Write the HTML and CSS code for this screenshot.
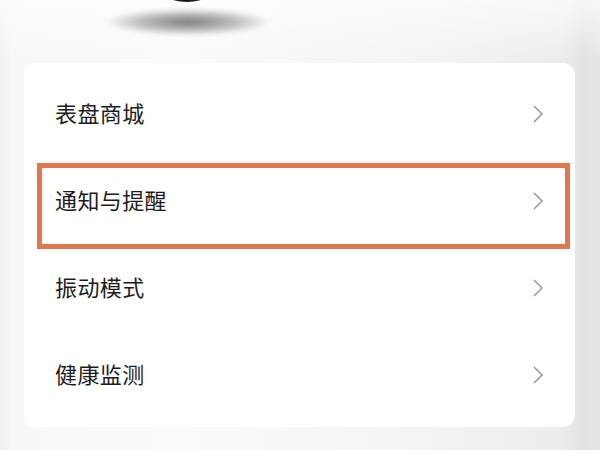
FILE: index.html
```html
<!DOCTYPE html>
<html lang="zh-CN">
<head>
    <meta charset="UTF-8">
    <meta name="viewport" content="width=device-width, initial-scale=1.0">
    <title>设置</title>
    <link rel="stylesheet" href="styles.css">
</head>
<body>
    <div class="page">
        <div class="watch-base"></div>
        <div class="watch-shadow"></div>

        <div class="card">
            <div class="row">
                <span class="row-label">表盘商城</span>
                <svg class="chevron" viewBox="0 0 10 18"><path d="M1 1 L9 9 L1 17"/></svg>
            </div>
            <div class="row">
                <span class="row-label">通知与提醒</span>
                <svg class="chevron" viewBox="0 0 10 18"><path d="M1 1 L9 9 L1 17"/></svg>
                <div class="highlight"></div>
            </div>
            <div class="row">
                <span class="row-label">振动模式</span>
                <svg class="chevron" viewBox="0 0 10 18"><path d="M1 1 L9 9 L1 17"/></svg>
            </div>
            <div class="row">
                <span class="row-label">健康监测</span>
                <svg class="chevron" viewBox="0 0 10 18"><path d="M1 1 L9 9 L1 17"/></svg>
            </div>
        </div>
    </div>
</body>
</html>
```

FILE: styles.css
```css
body {
    margin: 0;
    padding: 0;
    font-family: "Noto Sans CJK SC", "Noto Sans", sans-serif;
    color: #1c1c1c;
}

.page {
    position: relative;
    width: 600px;
    height: 450px;
    box-sizing: border-box;
    padding: 63px 25px 0 24px;
    overflow: hidden;
    background:
        linear-gradient(to bottom, rgba(255, 255, 255, 0.7) 0%, rgba(255, 255, 255, 0) 60px),
        linear-gradient(to right, #f1f1f1 0%, #f8f8f8 2%, #fbfbfb 30%, #f4f4f4 70%, #ececec 94%, #e2e2e2 97%, #e6e6e6 100%);
}

.watch-base {
    position: absolute;
    left: 170px;
    top: -8px;
    width: 34px;
    height: 10px;
    border-radius: 50%;
    background: #1a1a1a;
}

.watch-shadow {
    position: absolute;
    left: 104px;
    top: 8px;
    width: 168px;
    height: 28px;
    border-radius: 50%;
    background: radial-gradient(ellipse at center, rgba(0, 0, 0, 0.5) 0%, rgba(0, 0, 0, 0.25) 40%, rgba(0, 0, 0, 0) 70%);
    filter: blur(2px);
}

.card {
    background-color: #fff;
    border-radius: 12px;
    padding: 8px 0;
    width: 551px;
    box-sizing: border-box;
}

.row {
    position: relative;
    height: 87px;
    box-sizing: border-box;
    display: flex;
    align-items: center;
    justify-content: space-between;
    padding: 0 32px 2px 31px;
}

.row-label {
    font-size: 22px;
    letter-spacing: 0.4px;
    line-height: 1;
    margin-bottom: 4px;
}

.chevron {
    width: 10px;
    height: 18px;
    fill: none;
    stroke: #959595;
    stroke-width: 1.5;
}

.highlight {
    position: absolute;
    left: 13px;
    right: 5px;
    top: 5px;
    height: 86px;
    box-sizing: border-box;
    border: 5px solid #e2764f;
}
```
